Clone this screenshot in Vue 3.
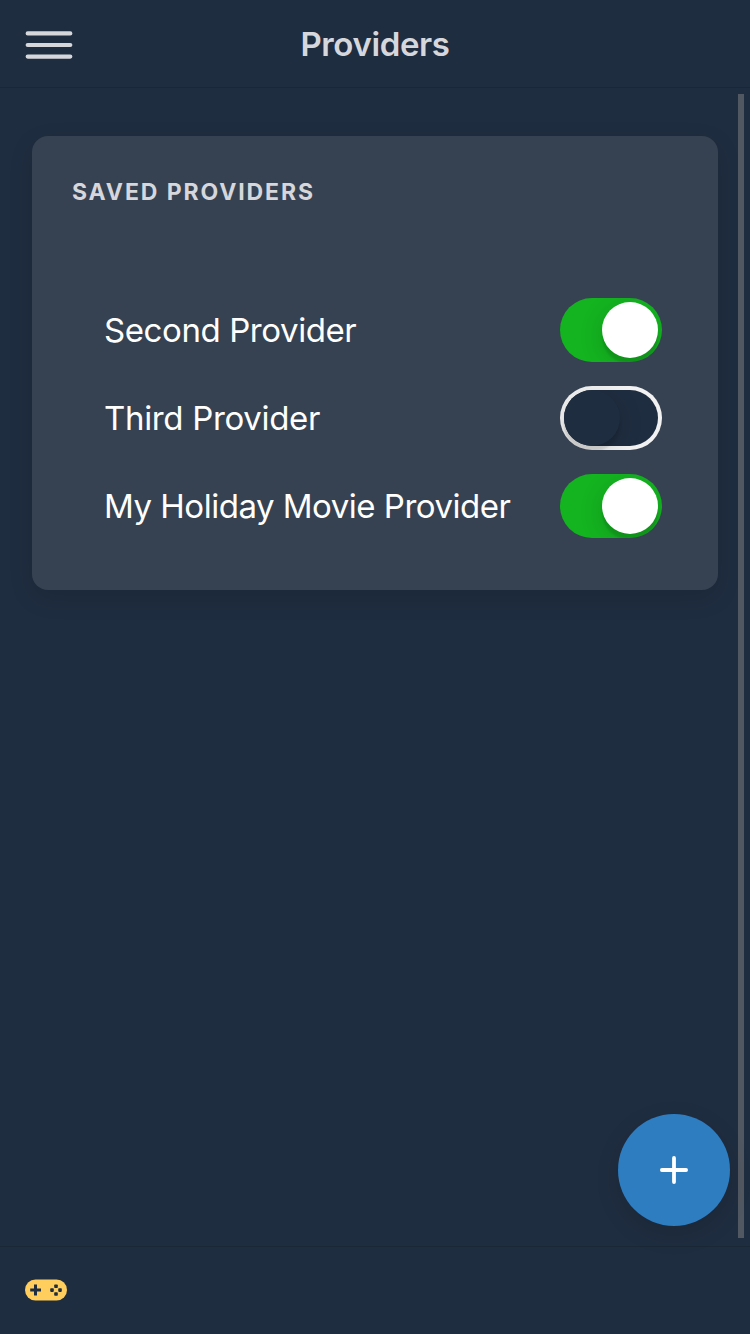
<script setup>
import { ref } from 'vue'

const providers = ref([
  { name: 'Second Provider', key: 'second', enabled: true },
  { name: 'Third Provider', key: 'third', enabled: false },
  { name: 'My Holiday Movie Provider', key: 'holiday', enabled: true },
])
</script>

<template>
  <div class="page">
    <header class="header">
      <button class="menu" aria-label="Menu">
        <svg width="50" height="32" viewBox="0 0 50 32" fill="none" stroke="#d6d7dc" stroke-width="4.2" stroke-linecap="round">
          <path d="M3.7 4.4H46.3M3.7 16H46.3M3.7 27.6H46.3" />
        </svg>
      </button>
      <h1 class="title">Providers</h1>
    </header>

    <main class="content">
      <section class="card">
        <h2 class="card-title">Saved Providers</h2>
        <ul class="list">
          <li v-for="p in providers" :key="p.key" class="row">
            <span class="name" :class="p.key">{{ p.name }}</span>
            <button
              class="toggle"
              :class="{ on: p.enabled }"
              role="switch"
              :aria-checked="p.enabled"
              :aria-label="p.name"
              @click="p.enabled = !p.enabled"
            >
              <span class="knob"></span>
            </button>
          </li>
        </ul>
      </section>
      <div class="scrollbar"></div>
      <button class="fab" aria-label="Add provider">
        <svg width="32" height="32" viewBox="0 0 32 32" stroke="#fff" stroke-width="3.8" stroke-linecap="round">
          <path d="M16 3.9V28.1M3.9 16H28.1" />
        </svg>
      </button>
    </main>

    <footer class="footer">
      <svg width="42" height="22" viewBox="0 0 42 22">
        <rect x="0" y="0.5" width="42" height="21" rx="10.5" fill="#ffce5c" />
        <g fill="#1f2d40">
          <path d="M9 5.6h3v3.9h4v3h-4v3.9H9v-3.9H5.2v-3H9z" />
          <rect x="29.2" y="5.4" width="3.6" height="3.6" rx="0.8" />
          <rect x="29.2" y="13.2" width="3.6" height="3.6" rx="0.8" />
          <rect x="25.2" y="9.3" width="3.6" height="3.6" rx="0.8" />
          <rect x="33.2" y="9.3" width="3.6" height="3.6" rx="0.8" />
        </g>
      </svg>
    </footer>
  </div>
</template>

<style>
body {
  margin: 0;
  background: #1f2d40;
}
</style>

<style scoped>
.page {
  display: flex;
  flex-direction: column;
  width: 750px;
  height: 1334px;
  overflow: hidden;
  background: #1f2d40;
  color: #fff;
  font-family: Inter, 'Liberation Sans', sans-serif;
}

button {
  padding: 0;
  border: 0;
  background: none;
  display: block;
  cursor: pointer;
}

svg {
  display: block;
}

.header {
  box-sizing: border-box;
  flex: none;
  height: 88px;
  display: grid;
  grid-template-columns: 100px 1fr 100px;
  align-items: center;
  border-bottom: 1px solid #1a2734;
}

.menu {
  margin: 3px 0 0 24px;
  width: 50px;
}

.title {
  margin: 1px 0 0;
  text-align: center;
  font-size: 33px;
  line-height: 42px;
  font-weight: 600;
  letter-spacing: -0.38px;
  color: #d6d7dc;
}

.content {
  position: relative;
  flex: 1;
  padding: 48px 32px;
}

.card {
  box-sizing: border-box;
  height: 454px;
  padding: 40px 56px 40px 40px;
  border-radius: 16px;
  background: #364251;
  box-shadow: 0 8px 24px rgba(0, 0, 0, 0.12);
}

.card-title {
  margin: 0;
  font-size: 23px;
  line-height: 32px;
  font-weight: 650;
  letter-spacing: 1.9px;
  text-transform: uppercase;
  white-space: nowrap;
  color: #d6d7dc;
}

.list {
  list-style: none;
  margin: 78px 0 0;
  padding: 0 0 0 32px;
}

.row {
  display: flex;
  align-items: center;
  justify-content: space-between;
  height: 88px;
}

.name {
  font-size: 33px;
  line-height: 42px;
  font-weight: 400;
  letter-spacing: -0.41px;
  white-space: nowrap;
}

.name.third {
  letter-spacing: -0.33px;
}

.name.holiday {
  letter-spacing: -0.49px;
}

.toggle {
  box-sizing: border-box;
  flex: none;
  position: relative;
  width: 102px;
  height: 64px;
  padding: 4px;
  border-radius: 32px;
  overflow: hidden;
  background: #f2f2f2;
}

.toggle::before {
  content: '';
  position: absolute;
  inset: 4px;
  border-radius: 28px;
  background: #1f2d40;
}

.toggle.on {
  background: #14b320;
}

.toggle.on::before {
  display: none;
}

.knob {
  position: relative;
  display: block;
  width: 56px;
  height: 56px;
  border-radius: 50%;
  background: #1f2d40;
  box-shadow: 0 6px 24px rgba(0, 0, 0, 0.15), 0 6px 2px rgba(0, 0, 0, 0.1);
}

.toggle.on .knob {
  margin-left: 38px;
  background: #fff;
}

.scrollbar {
  position: absolute;
  right: 6px;
  top: 6px;
  bottom: 8px;
  width: 6px;
  background: #525861;
}

.fab {
  position: absolute;
  right: 20px;
  bottom: 20px;
  width: 112px;
  height: 112px;
  border-radius: 50%;
  display: flex;
  align-items: center;
  justify-content: center;
  background: #2e7dc1;
  box-shadow: 0 8px 24px rgba(0, 0, 0, 0.12);
}

.footer {
  box-sizing: border-box;
  flex: none;
  height: 88px;
  padding: 0 0 2px 25px;
  display: flex;
  align-items: center;
  border-top: 1px solid #1a2734;
}
</style>
